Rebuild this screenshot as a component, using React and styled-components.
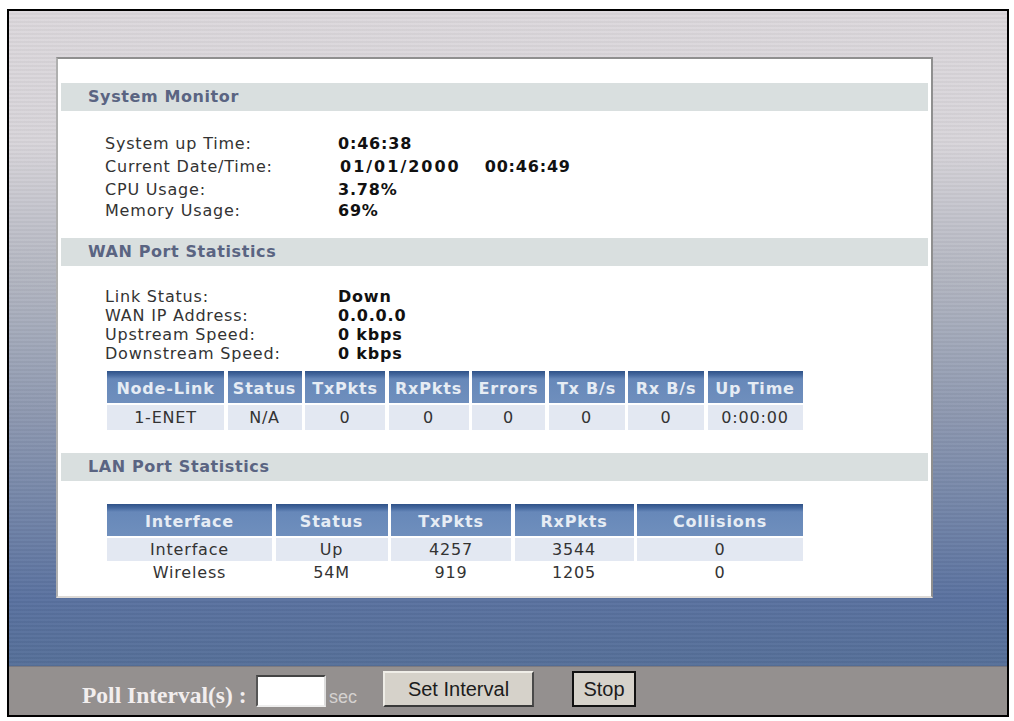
import styled, { createGlobalStyle } from "styled-components"

const GlobalStyle = createGlobalStyle`
    html, body {
        margin: 0;
        padding: 0;
        background: #ffffff;
    }
`

const Frame = styled.div`
    box-sizing: border-box;
    width: 1002px;
    height: 708px;
    margin: 9px 0 0 7px;
    border: 2px solid #000;
    display: flex;
    flex-direction: column;
    font-family: "DejaVu Sans", Verdana, sans-serif;
`
const Stage = styled.div`
    flex: 1;
    padding: 46px 74px 68px 47px;
    background:
        repeating-linear-gradient(180deg, rgba(255,255,255,0.025) 0 2px, rgba(0,0,0,0.03) 2px 4px),
        linear-gradient(180deg, #dcd8dc 0%, #d8d5da 20%, #b4b7c2 40%, #8d98b0 62%, #5a72a0 90%, #567099 100%);
`
const Card = styled.div`
    box-sizing: border-box;
    height: 541px;
    background: #fff;
    border: 2px solid #8f8f8f;
    border-bottom-color: #dedad6;
    border-left-color: #b0b0b0;
    padding: 24px 3px 0;
`
const SectionBar = styled.div`
    height: 28px;
    line-height: 28px;
    background: #d9dfdf;
    padding-left: 27px;
    font-size: 16px;
    letter-spacing: 0.6px;
    font-weight: bold;
    color: #5a6482;
`
const Info = styled.div`
    height: ${props => props.$height}px;
    padding: ${props => props.$top}px 0 0 44px;
    box-sizing: border-box;
`
const Row = styled.div`
    display: flex;
    height: ${props => props.$height}px;
    align-items: center;
    font-size: 16px;
    letter-spacing: 0.8px;
    color: #333;
    white-space: nowrap;
`
const Label = styled.span`
    width: 233px;
`
const Value = styled.span`
    font-weight: bold;
    color: #111;
`
const DateValue = styled(Value)`
    margin-left: 2px;
    letter-spacing: 2px;
`
const TimeValue = styled(Value)`
    margin-left: 24px;
`
const Grid = styled.div`
    display: grid;
    grid-template-columns: ${props => props.$cols};
    column-gap: 3.5px;
    margin-left: 46px;
    width: 696px;
`
const Head = styled.div`
    height: 32px;
    line-height: 36px;
    box-sizing: border-box;
    margin-bottom: 2px;
    background: linear-gradient(180deg, #2f5288 0, #46699f 4px, #6788b9 8px, #6f8fbd 100%);
    color: #e6ecf4;
    font-size: 16px;
    letter-spacing: 0.8px;
    font-weight: bold;
    text-align: center;
    white-space: nowrap;
`
const Cell = styled.div`
    height: ${props => props.$height}px;
    line-height: ${props => props.$height}px;
    background: ${props => props.$shade ? "#e3e8f2" : "#fff"};
    color: #333;
    font-size: 16px;
    letter-spacing: 0.8px;
    text-align: center;
    white-space: nowrap;
`
const Footer = styled.div`
    height: 49px;
    box-sizing: border-box;
    background: #94908f;
    border-top: 1px solid #7c7a80;
    display: flex;
    align-items: flex-start;
`
const PollLabel = styled.span`
    font-family: "Liberation Serif", serif;
    font-weight: bold;
    font-size: 23.5px;
    color: #f2eeee;
    margin: 15px 0 0 73px;
    width: 174px;
    white-space: nowrap;
`
const PollInput = styled.input`
    box-sizing: border-box;
    width: 70px;
    height: 32px;
    margin-top: 8px;
    background: #fff;
    border: 2px solid;
    border-color: #444 #ddd #eee #555;
    padding: 0;
`
const Sec = styled.span`
    font-family: "Liberation Sans", sans-serif;
    font-size: 18px;
    color: #d4d2d0;
    margin: 20px 0 0 3px;
    width: 54px;
`
const Button = styled.button`
    box-sizing: border-box;
    width: ${props => props.$width}px;
    height: 36px;
    margin: 4px ${props => props.$after || 0}px 0 0;
    background: #d6d2ca;
    color: #1c1c1c;
    font-family: "Liberation Sans", sans-serif;
    font-size: 20px;
    padding: 0;
    border: 2px solid;
    border-color: ${props => props.$focus ? "#111" : "#f0eee8 #4a4a4a #3a3a3a #eeece6"};
`

const wanCols = "117px 74px 80px 80px 73px 76px 76px 95px"
const lanCols = "165px 112px 120px 119px 166px"

const wanHead = ["Node-Link", "Status", "TxPkts", "RxPkts", "Errors", "Tx B/s", "Rx B/s", "Up Time"]
const wanRow = ["1-ENET", "N/A", "0", "0", "0", "0", "0", "0:00:00"]
const lanHead = ["Interface", "Status", "TxPkts", "RxPkts", "Collisions"]
const lanRows = [
    ["Interface", "Up", "4257", "3544", "0"],
    ["Wireless", "54M", "919", "1205", "0"],
]

const App = () => {
    return (
        <>
            <GlobalStyle />
            <Frame>
                <Stage>
                    <Card>
                        <SectionBar>System Monitor</SectionBar>
                        <Info $height={127} $top={21}>
                            <Row $height={23}><Label>System up Time:</Label><Value>0:46:38</Value></Row>
                            <Row $height={23}><Label>Current Date/Time:</Label><DateValue>01/01/2000</DateValue><TimeValue>00:46:49</TimeValue></Row>
                            <Row $height={22}><Label>CPU Usage:</Label><Value>3.78%</Value></Row>
                            <Row $height={20}><Label>Memory Usage:</Label><Value>69%</Value></Row>
                        </Info>
                        <SectionBar>WAN Port Statistics</SectionBar>
                        <Info $height={105} $top={21}>
                            <Row $height={19}><Label>Link Status:</Label><Value>Down</Value></Row>
                            <Row $height={19}><Label>WAN IP Address:</Label><Value>0.0.0.0</Value></Row>
                            <Row $height={19}><Label>Upstream Speed:</Label><Value>0 kbps</Value></Row>
                            <Row $height={19}><Label>Downstream Speed:</Label><Value>0 kbps</Value></Row>
                        </Info>
                        <Grid $cols={wanCols}>
                            {wanHead.map(h => <Head key={h}>{h}</Head>)}
                            {wanRow.map((c, i) => <Cell key={i} $height={25} $shade>{c}</Cell>)}
                        </Grid>
                        <Info $height={23} $top={0} />
                        <SectionBar>LAN Port Statistics</SectionBar>
                        <Info $height={23} $top={0} />
                        <Grid $cols={lanCols}>
                            {lanHead.map(h => <Head key={h}>{h}</Head>)}
                            {lanRows.map((row, r) => row.map((c, i) => (
                                <Cell key={r + "-" + i} $height={r === 0 ? 23 : 24} $shade={r === 0}>{c}</Cell>
                            )))}
                        </Grid>
                    </Card>
                </Stage>
                <Footer>
                    <PollLabel>Poll Interval(s) :</PollLabel>
                    <PollInput />
                    <Sec>sec</Sec>
                    <Button $width={151} $after={38}>Set Interval</Button>
                    <Button $width={64} $focus>Stop</Button>
                </Footer>
            </Frame>
        </>
    )
}

export default App
